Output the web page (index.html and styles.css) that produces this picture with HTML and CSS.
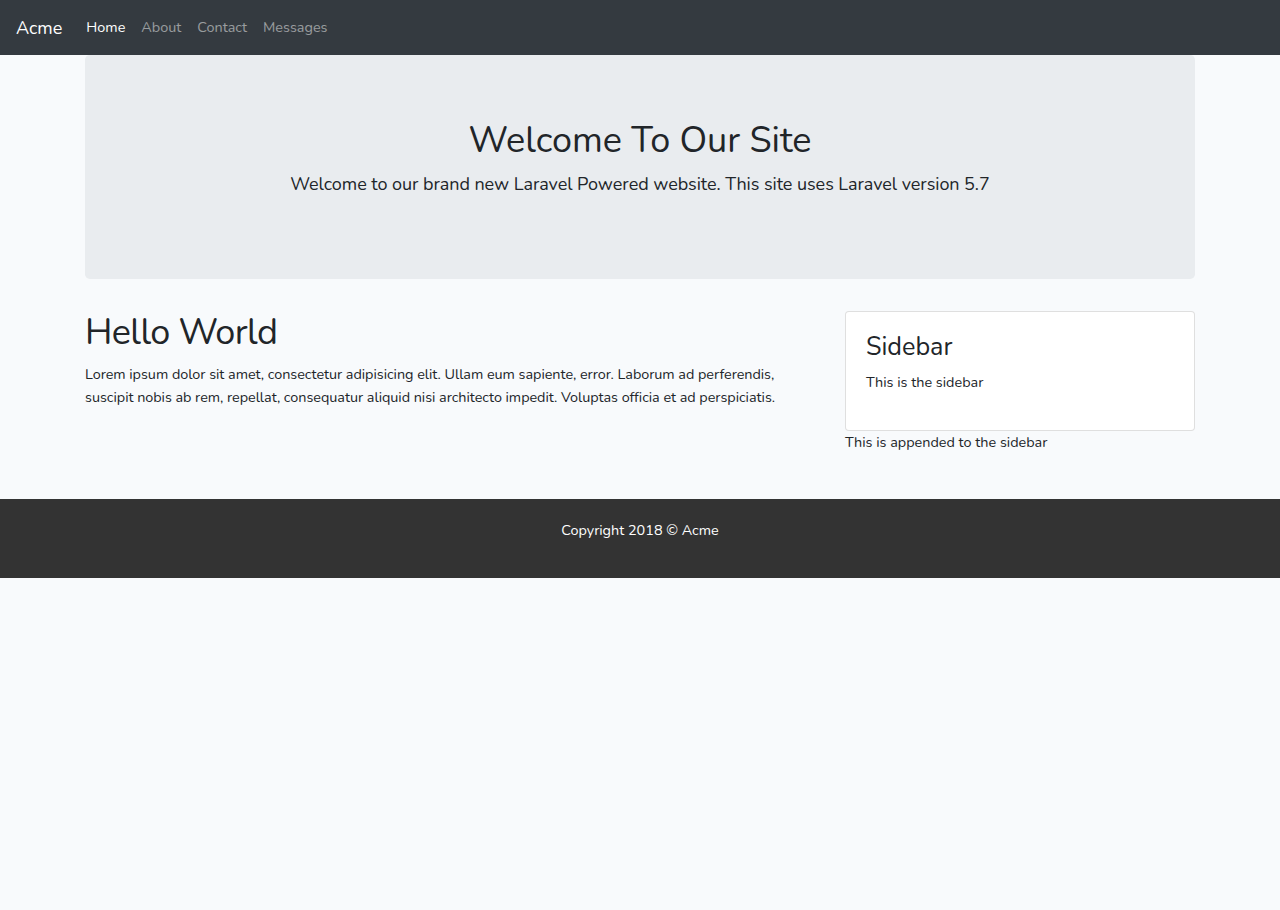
FILE: index.html
```html
<!DOCTYPE html>
<html lang="en">
<head>
<meta charset="utf-8">
<title>Acme</title>
<link rel="stylesheet" href="styles.css">
</head>
<body>
<nav class="navbar">
  <a class="brand" href="#">Acme</a>
  <ul class="nav-links">
    <li><a class="nav-link active" href="#">Home</a></li>
    <li><a class="nav-link" href="#">About</a></li>
    <li><a class="nav-link" href="#">Contact</a></li>
    <li><a class="nav-link" href="#">Messages</a></li>
  </ul>
</nav>
<div class="container">
  <div class="jumbotron">
    <h1 class="jumbo-title">Welcome To Our Site</h1>
    <p class="lead">Welcome to our brand new Laravel Powered website. This site uses Laravel version 5.7</p>
  </div>
  <div class="row">
    <main class="main-col">
      <h1 class="page-title">Hello World</h1>
      <p class="text">Lorem ipsum dolor sit amet, consectetur adipisicing elit. Ullam eum sapiente, error. Laborum ad perferendis, suscipit nobis ab rem, repellat, consequatur aliquid nisi architecto impedit. Voluptas officia et ad perspiciatis.</p>
    </main>
    <aside class="side-col">
      <div class="card">
        <h3 class="card-title">Sidebar</h3>
        <p class="text">This is the sidebar</p>
      </div>
      <p class="text">This is appended to the sidebar</p>
    </aside>
  </div>
</div>
<footer class="footer">
  <p class="footer-text">Copyright 2018 &copy; Acme</p>
</footer>
</body>
</html>
```
FILE: styles.css
```css
* { box-sizing: border-box; }
body {
  margin: 0;
  background: #f8fafc;
  color: #212529;
  font-family: "Nunito", "Lato", sans-serif;
  font-size: 14.4px;
  line-height: 1.6;
}
a { text-decoration: none; }
.navbar {
  background: #343a40;
  height: 55px;
  padding: 1px 16px 0;
  display: flex;
  align-items: center;
}
.brand {
  color: #fff;
  font-size: 18px;
  margin-right: 16px;
}
.nav-links {
  list-style: none;
  margin: 0;
  padding: 0;
  display: flex;
}
.nav-link {
  display: block;
  padding: 8px;
  color: rgba(255,255,255,.5);
}
.nav-link.active { color: #fff; }
.container {
  width: 1110px;
  margin: 0 auto;
}
.jumbotron {
  background: #e9ecef;
  border-radius: 4.8px;
  padding: 64px 32px 66px;
  margin-bottom: 32px;
  text-align: center;
}
.jumbo-title {
  margin: 0 0 8px;
  font-size: 36px;
  font-weight: 400;
  line-height: 1.2;
}
.lead {
  margin: 0 0 14.4px;
  font-size: 18px;
  font-weight: 400;
  letter-spacing: -0.05px;
}
.row {
  display: flex;
  gap: 50px;
}
.main-col { width: 710px; }
.side-col { width: 350px; }
.page-title {
  margin: 0 0 8px;
  font-size: 36px;
  font-weight: 400;
  line-height: 1.2;
  letter-spacing: -0.6px;
}
.text { margin: 0 0 14.4px; }
.main-col .text { letter-spacing: -0.03px; }
.card {
  background: #fff;
  border: 1px solid rgba(0,0,0,.125);
  border-radius: 4px;
  padding: 20px 20px 21.5px;
}
.card-title {
  margin: 0 0 8px;
  font-size: 25.2px;
  font-weight: 400;
  line-height: 1.2;
}
.card .text { margin-bottom: 14.4px; }
.side-col > .text { margin: 0; }
.footer {
  margin-top: 45.5px;
  background: #333;
  color: #fff;
  text-align: center;
  padding: 20px 0 21px;
}
.footer-text { margin: 0 0 14.4px; }
```
